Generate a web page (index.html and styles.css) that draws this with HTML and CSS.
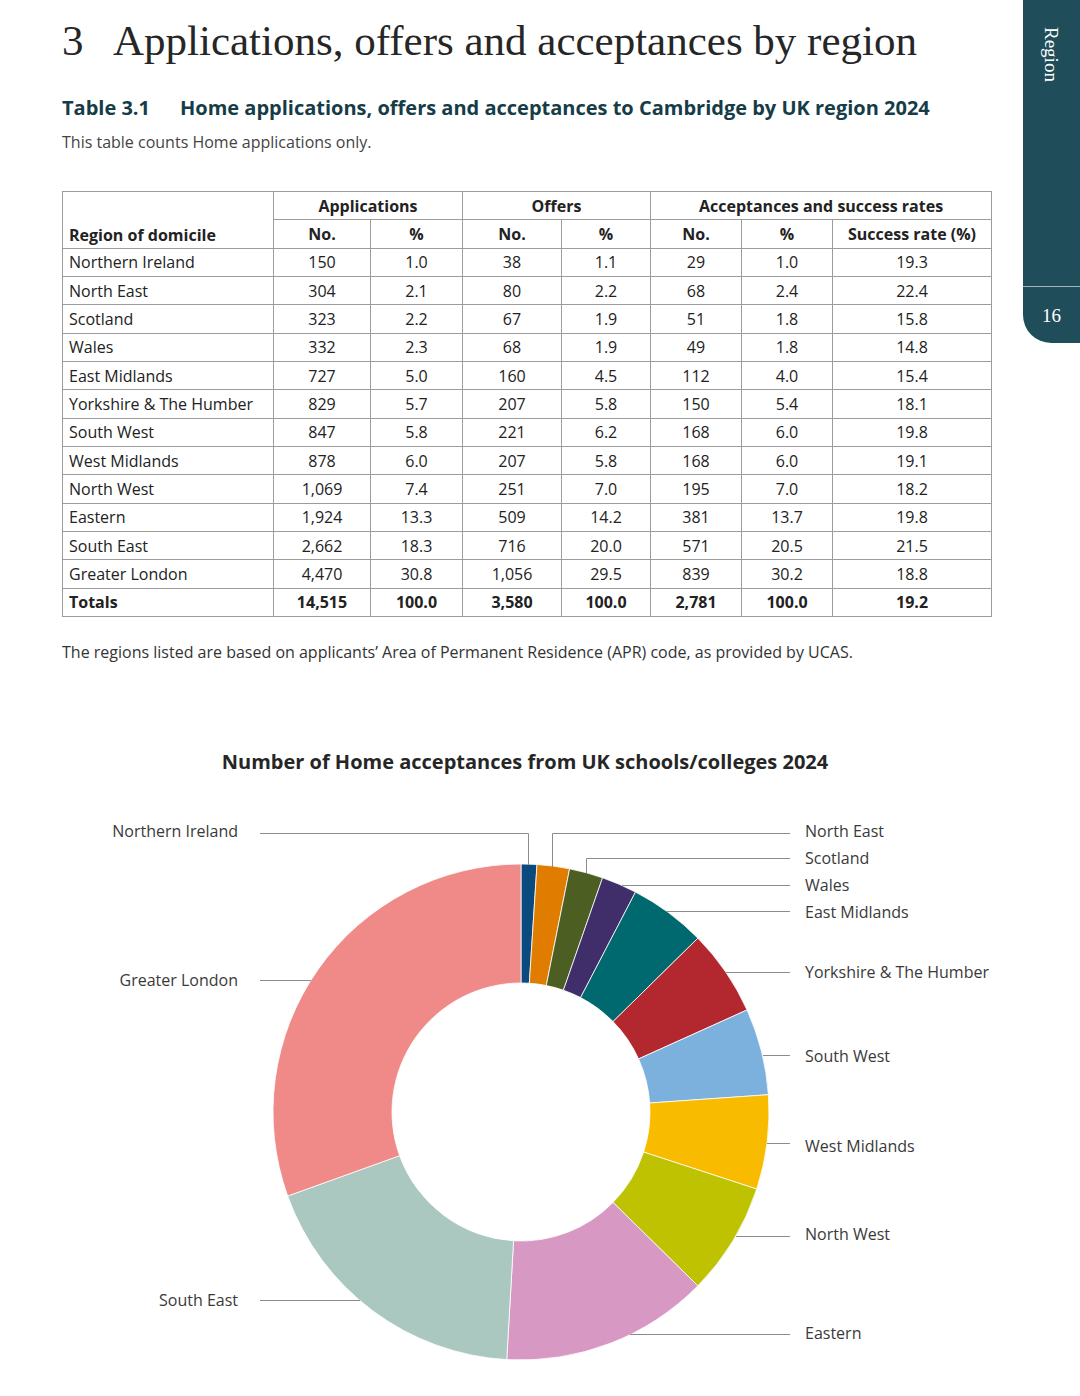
FILE: index.html
```html
<!DOCTYPE html>
<html lang="en">
<head>
<meta charset="utf-8">
<title>Applications, offers and acceptances by region</title>
<link rel="stylesheet" href="styles.css">
</head>
<body>
<div class="page">
  <aside class="tab">
    <div class="tab-top"><span class="tab-label">Region</span></div>
    <div class="tab-bottom"><span class="tab-num">16</span></div>
  </aside>

  <section class="content">
    <h1 class="title"><span class="title-num">3</span>Applications, offers and acceptances by region</h1>
    <h2 class="caption"><span class="caption-num">Table 3.1</span>Home applications, offers and acceptances to Cambridge by UK region 2024</h2>
    <p class="note">This table counts Home applications only.</p>

    <table class="data">
      <colgroup>
        <col class="c-region"><col class="c-a1"><col class="c-a2"><col class="c-o1"><col class="c-o2"><col class="c-s1"><col class="c-s2"><col class="c-s3">
      </colgroup>
      <thead>
        <tr>
          <th class="region-head" rowspan="2">Region of domicile</th>
          <th colspan="2">Applications</th>
          <th colspan="2">Offers</th>
          <th colspan="3">Acceptances and success rates</th>
        </tr>
        <tr>
          <th>No.</th><th>%</th><th>No.</th><th>%</th><th>No.</th><th>%</th><th>Success rate (%)</th>
        </tr>
      </thead>
      <tbody>
        <tr><td>Northern Ireland</td><td>150</td><td>1.0</td><td>38</td><td>1.1</td><td>29</td><td>1.0</td><td>19.3</td></tr>
        <tr><td>North East</td><td>304</td><td>2.1</td><td>80</td><td>2.2</td><td>68</td><td>2.4</td><td>22.4</td></tr>
        <tr><td>Scotland</td><td>323</td><td>2.2</td><td>67</td><td>1.9</td><td>51</td><td>1.8</td><td>15.8</td></tr>
        <tr><td>Wales</td><td>332</td><td>2.3</td><td>68</td><td>1.9</td><td>49</td><td>1.8</td><td>14.8</td></tr>
        <tr><td>East Midlands</td><td>727</td><td>5.0</td><td>160</td><td>4.5</td><td>112</td><td>4.0</td><td>15.4</td></tr>
        <tr><td>Yorkshire &amp; The Humber</td><td>829</td><td>5.7</td><td>207</td><td>5.8</td><td>150</td><td>5.4</td><td>18.1</td></tr>
        <tr><td>South West</td><td>847</td><td>5.8</td><td>221</td><td>6.2</td><td>168</td><td>6.0</td><td>19.8</td></tr>
        <tr><td>West Midlands</td><td>878</td><td>6.0</td><td>207</td><td>5.8</td><td>168</td><td>6.0</td><td>19.1</td></tr>
        <tr><td>North West</td><td>1,069</td><td>7.4</td><td>251</td><td>7.0</td><td>195</td><td>7.0</td><td>18.2</td></tr>
        <tr><td>Eastern</td><td>1,924</td><td>13.3</td><td>509</td><td>14.2</td><td>381</td><td>13.7</td><td>19.8</td></tr>
        <tr><td>South East</td><td>2,662</td><td>18.3</td><td>716</td><td>20.0</td><td>571</td><td>20.5</td><td>21.5</td></tr>
        <tr><td>Greater London</td><td>4,470</td><td>30.8</td><td>1,056</td><td>29.5</td><td>839</td><td>30.2</td><td>18.8</td></tr>
        <tr class="totals"><td>Totals</td><td>14,515</td><td>100.0</td><td>3,580</td><td>100.0</td><td>2,781</td><td>100.0</td><td>19.2</td></tr>
      </tbody>
    </table>

    <p class="footnote">The regions listed are based on applicants’ Area of Permanent Residence (APR) code, as provided by UCAS.</p>
  </section>

  <section class="chart">
    <h3 class="chart-title">Number of Home acceptances from UK schools/colleges 2024</h3>
    <svg class="donut" width="1080" height="596" viewBox="0 800 1080 596" xmlns="http://www.w3.org/2000/svg">
      <g class="segments" stroke="#ffffff" stroke-width="0.8">
        <path fill="#0b4a7d" d="M521 863 A248 248 0 0 1 537.00 863.52 L529.32 982.27 A129 129 0 0 0 521 982 Z"/>
        <path fill="#e07c00" d="M537.00 863.52 A248 248 0 0 1 569.60 867.81 L546.28 984.50 A129 129 0 0 0 529.32 982.27 Z"/>
        <path fill="#4c5e22" d="M569.60 867.81 A248 248 0 0 1 602.56 876.79 L563.42 989.17 A129 129 0 0 0 546.28 984.50 Z"/>
        <path fill="#3f2e69" d="M602.56 876.79 A248 248 0 0 1 635.51 891.02 L580.57 996.58 A129 129 0 0 0 563.42 989.17 Z"/>
        <path fill="#00696f" d="M635.51 891.02 A248 248 0 0 1 697.89 937.17 L613.01 1020.58 A129 129 0 0 0 580.57 996.58 Z"/>
        <path fill="#b3282e" d="M697.89 937.17 A248 248 0 0 1 747.03 1008.95 L638.57 1057.91 A129 129 0 0 0 613.01 1020.58 Z"/>
        <path fill="#7cb1de" d="M747.03 1008.95 A248 248 0 0 1 768.40 1093.70 L649.69 1102.00 A129 129 0 0 0 638.57 1057.91 Z"/>
        <path fill="#f8bb00" d="M768.40 1093.70 A248 248 0 0 1 756.73 1188.05 L643.62 1151.08 A129 129 0 0 0 649.69 1102.00 Z"/>
        <path fill="#bec200" d="M756.73 1188.05 A248 248 0 0 1 697.89 1284.83 L613.01 1201.42 A129 129 0 0 0 643.62 1151.08 Z"/>
        <path fill="#d898c4" d="M697.89 1284.83 A248 248 0 0 1 506.73 1358.59 L513.57 1239.79 A129 129 0 0 0 613.01 1201.42 Z"/>
        <path fill="#aac7c0" d="M506.73 1358.59 A248 248 0 0 1 287.66 1195.01 L399.63 1154.70 A129 129 0 0 0 513.57 1239.79 Z"/>
        <path fill="#ef8a89" d="M287.66 1195.01 A248 248 0 0 1 521 863 L521 982 A129 129 0 0 0 399.63 1154.70 Z"/>
      </g>
      <g class="leaders" fill="none" stroke="#8c8c8c" stroke-width="1">
        <path d="M260 832.5 H528.5 V864"/>
        <path d="M260 979.5 H311"/>
        <path d="M260 1299.5 H360"/>
        <path d="M790 832.5 H552.5 V866"/>
        <path d="M790 857.5 H586.5 V872"/>
        <path d="M790 884.5 H622"/>
        <path d="M790 910.5 H666"/>
        <path d="M790 971.5 H726"/>
        <path d="M790 1054.5 H763"/>
        <path d="M790 1142.5 H767"/>
        <path d="M790 1235.5 H736"/>
        <path d="M790 1333.5 H630"/>
      </g>
      <g class="labels">
        <text class="lbl" x="238" y="836" text-anchor="end">Northern Ireland</text>
        <text class="lbl" x="238" y="985" text-anchor="end">Greater London</text>
        <text class="lbl" x="238" y="1305" text-anchor="end">South East</text>
        <text class="lbl" x="805" y="836">North East</text>
        <text class="lbl" x="805" y="863">Scotland</text>
        <text class="lbl" x="805" y="890">Wales</text>
        <text class="lbl" x="805" y="917">East Midlands</text>
        <text class="lbl" x="805" y="977">Yorkshire &amp; The Humber</text>
        <text class="lbl" x="805" y="1061">South West</text>
        <text class="lbl" x="805" y="1151">West Midlands</text>
        <text class="lbl" x="805" y="1239">North West</text>
        <text class="lbl" x="805" y="1338">Eastern</text>
      </g>
    </svg>
  </section>
</div>
</body>
</html>
```

FILE: styles.css
```css
* { box-sizing: border-box; }

html, body {
  margin: 0;
  padding: 0;
  background: #ffffff;
}

body {
  font-family: "Open Sans", "Noto Sans", sans-serif;
  color: #2b2b2b;
  width: 1080px;
  height: 1396px;
  overflow: hidden;
}

.page {
  position: relative;
  width: 1080px;
  height: 1396px;
}

/* Side tab */
.tab {
  position: absolute;
  top: 0;
  right: 0;
  width: 57px;
  height: 343px;
  background: #1f4e5a;
  border-bottom-left-radius: 28px;
  display: flex;
  flex-direction: column;
}

.tab-top {
  height: 287px;
  border-bottom: 1px solid #9fb6bc;
  display: flex;
  justify-content: center;
  padding-top: 27px;
}

.tab-label {
  writing-mode: vertical-rl;
  font-family: "Liberation Serif", "Times New Roman", serif;
  font-size: 19px;
  color: #ffffff;
  line-height: 1;
}

.tab-bottom {
  flex: 1;
  display: flex;
  justify-content: center;
  padding-top: 19px;
}

.tab-num {
  font-family: "Liberation Serif", "Times New Roman", serif;
  font-size: 19px;
  color: #ffffff;
  line-height: 1;
}

/* Content */
.content {
  padding: 0 0 0 62px;
}

.title {
  margin: 0;
  padding-top: 17px;
  font-family: "Liberation Serif", "Times New Roman", serif;
  font-weight: normal;
  font-size: 43px;
  line-height: 48px;
  color: #262626;
}

.title-num {
  display: inline-block;
  width: 51px;
}

.caption {
  margin: 29px 0 0;
  font-size: 20px;
  line-height: 28px;
  font-weight: 700;
  color: #163c47;
}

.caption-num {
  display: inline-block;
  width: 118px;
}

.note {
  margin: 9px 0 0;
  font-size: 16px;
  line-height: 22px;
  color: #444444;
}

/* Table */
.data {
  margin-top: 38px;
  border-collapse: collapse;
  table-layout: fixed;
  width: 929px;
  font-size: 16px;
  color: #222222;
}

.c-region { width: 211px; }
.c-a1 { width: 97px; }
.c-a2 { width: 92px; }
.c-o1 { width: 99px; }
.c-o2 { width: 89px; }
.c-s1 { width: 91px; }
.c-s2 { width: 91px; }
.c-s3 { width: 159px; }

.data th,
.data td {
  border: 1px solid #9c9c9c;
  height: 28.33px;
  padding: 0 6px;
  line-height: 20px;
  text-align: center;
  white-space: nowrap;
}

.data th {
  font-weight: 700;
}

.data th.region-head {
  text-align: left;
  vertical-align: bottom;
  padding-bottom: 3px;
}

.data td:first-child {
  text-align: left;
}

.data .totals td {
  font-weight: 700;
}

.footnote {
  margin: 24px 0 0;
  font-size: 16px;
  line-height: 22px;
  color: #333333;
}

/* Chart */
.chart {
  padding-top: 85px;
}

.chart-title {
  margin: 0;
  text-align: center;
  font-size: 20px;
  line-height: 28px;
  font-weight: 700;
  color: #262626;
  padding-right: 30px;
}

.donut {
  display: block;
  margin-top: 25px;
}

.lbl {
  font-family: "Open Sans", "Noto Sans", sans-serif;
  font-size: 16px;
  fill: #3a3a3a;
}
```
